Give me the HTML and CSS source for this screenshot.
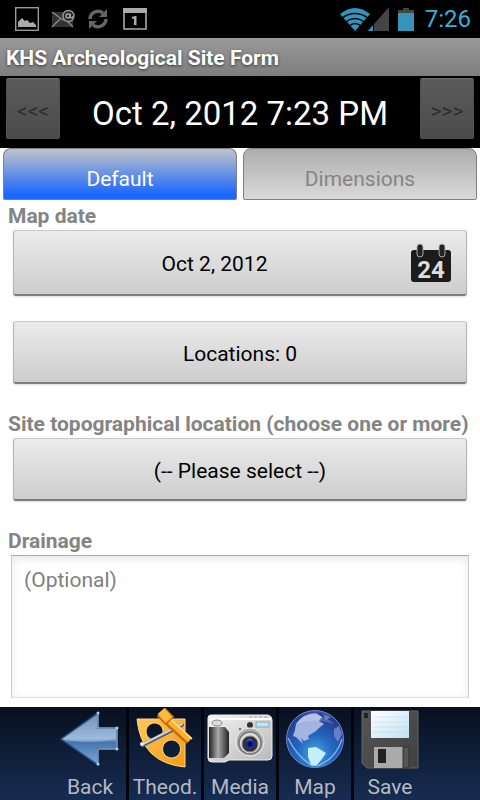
FILE: index.html
```html
<!DOCTYPE html>
<html lang="en">
<head>
<meta charset="utf-8">
<meta name="viewport" content="width=device-width, initial-scale=1">
<title>KHS Archeological Site Form</title>
<link rel="stylesheet" href="styles.css">
</head>
<body>
<div class="screen">
  <div class="status">
    <div class="notices">
      <svg width="24" height="24" viewBox="0 0 24 24" aria-hidden="true"><rect x=".7" y=".7" width="22.6" height="22.6" fill="none" stroke="#999" stroke-width="1.4"/><path d="M3 20v-5l4-4 3 3 2-1 3 3 3-1 3 3v2z" fill="#aaa"/></svg>
      <svg width="24" height="20" viewBox="0 0 24 20" aria-hidden="true"><path d="M1 3h21v15H1z" fill="#333"/><path d="M1 3l11 8 5-4M1 18l8-8M22 18l-7-7" fill="none" stroke="#8a8a8a" stroke-width="1.3"/><circle cx="17.500" cy="7" r="5.500" fill="#222" stroke="#999" stroke-width="1.400"/><circle cx="17" cy="7" r="2" fill="none" stroke="#aaa" stroke-width="1.400"/><path d="M19.200 4.500v3.500q1 2 3-.5" fill="none" stroke="#aaa" stroke-width="1.300"/></svg>
      <svg width="22" height="22" viewBox="0 0 22 22" aria-hidden="true"><path d="M3 11a8 8 0 0 1 13-6M19 11a8 8 0 0 1-13 6" fill="none" stroke="#666" stroke-width="3.500"/><path d="M20 1v8h-8zM2 21v-8h8z" fill="#666"/></svg>
      <svg class="cal" width="24" height="22" viewBox="0 0 24 22" aria-hidden="true"><path d="M1 1h22v20H1z" fill="none" stroke="#aaa" stroke-width="1.600"/><path d="M0 0h24v5H0z" fill="#aaa"/><path d="M9 9l3-1h1.500v9H11v-6.500l-2 .5z" fill="#aaa"/></svg>
    </div>
    <div class="system">
      <svg width="30" height="23" viewBox="0 0 30 23" aria-hidden="true"><path d="M0 6Q15-6 30 6L15 23z" fill="#3494bb"/><path d="M2 10q13-9 26 0M5.500 14q9.500-7 19 0M9 18q6-5 12 0" fill="none" stroke="#000" stroke-width="1.500"/></svg>
      <svg class="signal" width="21" height="24" viewBox="0 0 21 24" aria-hidden="true"><path d="M21 0v24H0z" fill="#444"/><path d="M5 18v6H0z" fill="#3494bb"/><path d="M5.500 17v7" stroke="#000"/></svg>
      <svg class="battery" width="16" height="23" viewBox="0 0 16 23" aria-hidden="true"><path d="M5 0h6v2h5v4H0V2h5z" fill="#444"/><path d="M0 5h16v18H0z" fill="#3494bb"/></svg>
      <span>7:26</span>
    </div>
  </div>
  <h1 class="title">KHS Archeological Site Form</h1>
  <div class="datebar">
    <button class="step" type="button" aria-label="Previous">&lt;&lt;&lt;</button>
    <div class="when">Oct 2, 2012 7:23 PM</div>
    <button class="step" type="button" aria-label="Next">&gt;&gt;&gt;</button>
  </div>
  <div class="tabs" role="tablist">
    <button class="tab active" type="button" role="tab" aria-selected="true">Default</button>
    <button class="tab" type="button" role="tab" aria-selected="false">Dimensions</button>
  </div>
  <form class="form">
    <label class="label first" for="mapdate">Map date</label>
    <button class="field tall" id="mapdate" type="button">
      <span>Oct 2, 2012</span>
      <svg width="42" height="44" viewBox="0 0 42 44" aria-hidden="true"><rect x="1" y="8" width="40" height="32" rx="3" fill="#1b1b1b"/><rect x="7" y="2" width="6" height="13" rx="3" fill="#222" stroke="#aaa"/><rect x="29" y="2" width="6" height="13" rx="3" fill="#222" stroke="#aaa"/><text x="21" y="36" text-anchor="middle" class="day">24</text></svg>
    </button>
    <button class="field locations" type="button">Locations: 0</button>
    <label class="label" for="topo">Site topographical location (choose one or more)</label>
    <button class="field" id="topo" type="button">(-- Please select --)</button>
    <label class="label" for="drainage">Drainage</label>
    <textarea class="note" id="drainage" placeholder="(Optional)"></textarea>
  </form>
  <nav class="toolbar">
    <button class="tool" type="button">
      <svg width="60" height="60" viewBox="0 0 60 60" aria-hidden="true">
        <defs><linearGradient id="ar" x2="0" y2="1"><stop offset="0" stop-color="#55779f"/><stop offset=".5" stop-color="#8fb2d8"/><stop offset=".56" stop-color="#4773ad"/><stop offset="1" stop-color="#7fa9dd"/></linearGradient></defs>
        <path d="M1 30L38 4V19H57V40H38V56z" fill="url(#ar)" stroke="#294f83" stroke-width="1.500"/><path d="M3 30L37 6V20H56V29Q32 37 3 30z" fill="#b8d2ec" opacity=".3"/><path d="M38 4V19H57M38 56V40H57V19" fill="none" stroke="#a0bedf"/><g fill="#b9cce1"><circle cx="38" cy="4" r="1.500"/><circle cx="57" cy="19" r="1.500"/><circle cx="57" cy="40" r="1.500"/><circle cx="38" cy="55" r="1.500"/></g></svg>
      <span>Back</span>
    </button>
    <button class="tool" type="button">
      <svg width="60" height="60" viewBox="0 0 60 60" aria-hidden="true">
        <defs><linearGradient id="or" x2="1" y2="1"><stop offset="0" stop-color="#ffc85a"/><stop offset="1" stop-color="#f39a16"/></linearGradient></defs>
        <path fill-rule="evenodd" d="M2 10H50V58Q6 54 2 10zM19.500 14a8.500 8.500 0 1 0 .1 0zM36.500 31a9 9 0 1 0 .1 0z" fill="url(#or)" stroke="#ffd788"/>
        <path d="M8 36L47 16" stroke="#59616b" stroke-width="4" stroke-linecap="round"/><path d="M8 35L47 15" stroke="#cdd3da" stroke-width="2" stroke-linecap="round"/><circle cx="7" cy="35" r="2" fill="#eee"/>
        <path d="M29 9L54 32" stroke="#c66b0d" stroke-width="8"/><path d="M30 8L55 31" stroke="#ffaf2b" stroke-width="6"/><path d="M31 6L57 30" stroke="#ffe09a" stroke-width="1.500"/>
        <path d="M26 3L35 12" stroke="#c66b0d" stroke-width="12"/><path d="M26 2L34 11" stroke="#ffb83e" stroke-width="9"/></svg>
      <span>Theod.</span>
    </button>
    <button class="tool" type="button">
      <svg width="66" height="60" viewBox="0 0 66 60" aria-hidden="true">
        <defs><linearGradient id="cm" x2="1" y2="1"><stop offset="0" stop-color="#f4f4f4"/><stop offset="1" stop-color="#b8b8b8"/></linearGradient><linearGradient id="gr"><stop offset="0" stop-color="#222"/><stop offset=".45" stop-color="#aaa"/><stop offset="1" stop-color="#222"/></linearGradient></defs>
        <path d="M1 9Q1 6 4 6H61Q65 7 65 11V47Q65 51 61 51H22L18 53H5Q1 53 1 49z" fill="url(#cm)" stroke="#eee"/><path d="M3 10H64" stroke="#fff" stroke-width="2"/><path d="M42 8h20" stroke="#c99" stroke-dasharray="3 2"/><path d="M2 18H18L22 23V44L17 49H2z" fill="url(#gr)"/><ellipse cx="10" cy="14" rx="5" ry="3" fill="#ddd" stroke="#888"/><rect x="49" y="13" width="13" height="5" fill="#bfe5fb" stroke="#8aa"/><circle cx="43" cy="16" r="3" fill="#333"/><circle cx="33" cy="20" r="1" fill="#444"/><circle cx="43" cy="33" r="14" fill="#aaa" stroke="#eee"/><circle cx="43" cy="34" r="11" fill="#ddd" stroke="#777" stroke-width="1.500"/><circle cx="43" cy="35" r="8" fill="#333" stroke="#888"/><circle cx="43" cy="35" r="5" fill="#1a2bab"/><circle cx="43" cy="35" r="2.500" fill="#101040"/><path d="M40 32l3-2 2 2" fill="none" stroke="#6076d0"/></svg>
      <span>Media</span>
    </button>
    <button class="tool" type="button">
      <svg width="60" height="60" viewBox="0 0 60 60" aria-hidden="true">
        <defs><radialGradient id="gl" cx=".5" cy=".75" r=".8"><stop offset="0" stop-color="#47a5ea"/><stop offset=".4" stop-color="#2467bd"/><stop offset=".85" stop-color="#253a8e"/><stop offset="1" stop-color="#7068c0"/></radialGradient></defs>
        <circle cx="30" cy="30" r="28.500" fill="url(#gl)" stroke="#7484cc"/><path d="M11 15Q18 4 31 4L37 8L34 12L39 15L34 19L31 22L26 25L23 27L24 30L19 32L16 29L18 35L11 28L8 27L10 21z" fill="#b0c0e6" opacity=".9"/><path d="M23 39L31 38L41 44L37 50L31 57L26 56L23 48z" fill="#c5effb"/><path d="M49 20L54 17L57 25L53 33L49 27zM38 5l8 3-5 3z" fill="#8097d6" opacity=".7"/><path d="M3 29Q12 48 28 57M57 30Q51 50 32 57" fill="none" stroke="#8bdbff" stroke-width="1.500" opacity=".7"/><path d="M10 15Q28-4 49 15Q30 8 10 15z" fill="#fff" opacity=".2"/></svg>
      <span>Map</span>
    </button>
    <button class="tool" type="button">
      <svg width="58" height="60" viewBox="0 0 58 60" aria-hidden="true">
        <defs><linearGradient id="fd" x2="1" y2="1"><stop offset="0" stop-color="#555"/><stop offset="1" stop-color="#414141"/></linearGradient><linearGradient id="pp" x2="1" y2="1"><stop offset="0" stop-color="#fff"/><stop offset="1" stop-color="#bfe2f6"/></linearGradient></defs>
        <path d="M1 2H57V59H6L1 54z" fill="url(#fd)" stroke="#666"/><path d="M10 2H48V29H10z" fill="url(#pp)"/><path d="M12 8h34M12 13h34M12 18h34M12 23h34" stroke="#b9cfdd" opacity=".4"/><rect x="3" y="4" width="4" height="5" fill="#222"/><path d="M13 38H42V59H13z" fill="#aaa"/><path d="M42 38H48V59H42z" fill="#555" stroke="#333"/><rect x="17" y="40" width="8" height="14" fill="#222"/></svg>
      <span>Save</span>
    </button>
  </nav>
</div>
</body>
</html>
```

FILE: styles.css
```css
* { box-sizing: border-box; }
body {
  margin: 0;
  background: #fff;
  font-family: Roboto, "Liberation Sans", sans-serif;
  font-size: 21px;
  line-height: 24px;
}
button, textarea { font: inherit; margin: 0; }
svg { display: block; flex: none; overflow: visible; }
.screen { display: flex; flex-direction: column; min-height: 100vh; }

.status {
  display: flex;
  align-items: center;
  justify-content: space-between;
  height: 38px;
  padding: 0 9px 0 15px;
  background: #000;
}
.notices, .system { display: flex; align-items: center; }
.notices { gap: 12px; }
.cal { margin-left: 2px; }
.system { color: #35b0dc; font-size: 24px; }
.signal { margin-left: -2px; }
.battery { margin: 0 11px 0 9px; }

.title {
  margin: 0;
  padding: 8px 6px 6px;
  background: linear-gradient(#999, #7e7e7e);
  color: #fff;
  font-size: 21px;
  font-weight: 700;
  line-height: 24px;
  text-shadow: 0 1px 3px #333;
}

.datebar {
  display: flex;
  justify-content: space-between;
  height: 72px;
  padding: 2px 6px 9px;
  background: #000;
}
.step {
  width: 54px;
  padding: 4px 0 0;
  border: 1px solid #505050;
  border-top-color: #6a6a6a;
  border-radius: 2px;
  background: linear-gradient(#5b5b5b, #4b4b4b);
  color: #2e2e2e;
  font-size: 21px;
}
.when {
  padding-top: 16px;
  color: #fff;
  font-size: 33px;
  line-height: 40px;
}

.tabs { display: flex; gap: 6px; padding: 0 3px; }
.tab {
  flex: 1;
  height: 52px;
  padding: 10px 0 0;
  border: 1px solid #808080;
  border-radius: 8px 8px 2px 2px;
  background: linear-gradient(#adadad, #dadada);
  color: #858585;
}
.tab.active {
  background: linear-gradient(#c0c4c8, #1a66ff 92%);
  border-bottom-color: #4a80e8;
  color: #fff;
}

.form { display: flex; flex-direction: column; flex: 1; padding: 0 8px; }
.label {
  margin-top: 28px;
  padding-bottom: 2px;
  color: #848484;
  font-weight: 700;
  white-space: nowrap;
}
.label.first { margin-top: 4px; }
.field {
  display: flex;
  align-items: center;
  justify-content: center;
  height: 63px;
  margin: 0 5px;
  padding: 3px 14px 0;
  border: 1px solid #b5b5b5;
  border-top-color: #c8c8c8;
  border-bottom: 2px solid #7d7d7d;
  border-radius: 3px;
  background: linear-gradient(#ebebeb, #cdcdcd);
  box-shadow: 0 1px 2px #ddd;
  color: #000;
}
.field.tall { height: 66px; }
.field.tall span { flex: 1; padding-right: 9px; }
.locations { margin-top: 25px; }
.day { fill: #ddd; font-size: 24px; font-weight: 700; }
.note {
  flex: 1;
  min-height: 100px;
  margin: 0 3px 9px;
  padding: 12px;
  border: 1px solid #ccc;
  border-top-color: #aaa;
  border-bottom-color: #e2e2e2;
  background: #fff;
  box-shadow: inset 0 3px 8px #e8e8e8;
  color: #000;
  resize: none;
}
.note::placeholder { color: #808080; opacity: 1; }

.toolbar {
  display: flex;
  justify-content: center;
  height: 93px;
  background: linear-gradient(#07101f, #172c52);
}
.tool {
  display: flex;
  flex-direction: column;
  align-items: center;
  justify-content: space-between;
  width: 72px;
  padding: 2px 0 1px;
  border: 0;
  background: none;
  color: #b4b9c3;
}
.tool + .tool { width: 75px; border-left: 3px solid #02050b; }
```
